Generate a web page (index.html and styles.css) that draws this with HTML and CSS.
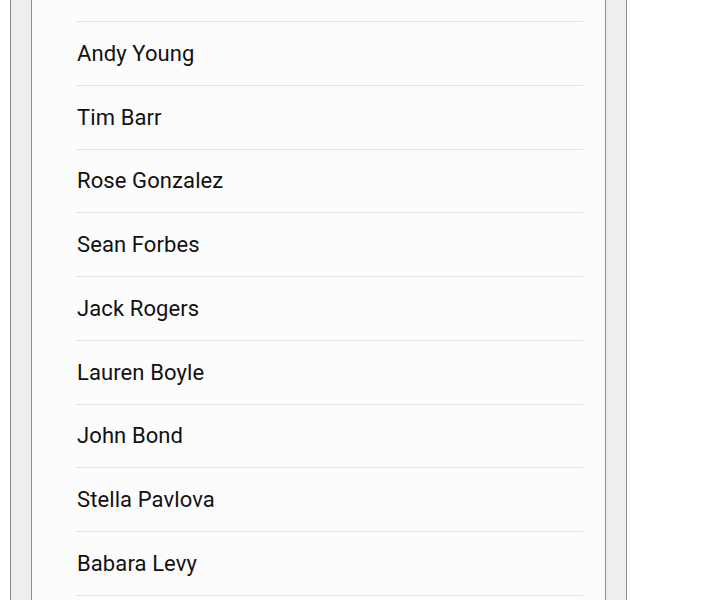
FILE: index.html
```html
<!DOCTYPE html>
<html>
<head>
<meta charset="utf-8">
<link rel="stylesheet" href="styles.css">
</head>
<body>
<div class="frame">
  <div class="panel">
    <ul class="list">
      <li class="item">Gordon Wallace</li>
      <li class="item">Andy Young</li>
      <li class="item">Tim Barr</li>
      <li class="item">Rose Gonzalez</li>
      <li class="item">Sean Forbes</li>
      <li class="item">Jack Rogers</li>
      <li class="item">Lauren Boyle</li>
      <li class="item">John Bond</li>
      <li class="item">Stella Pavlova</li>
      <li class="item">Babara Levy</li>
      <li class="item">Mark Taylor</li>
    </ul>
  </div>
</div>
</body>
</html>
```
FILE: styles.css
```css
html, body {
  margin: 0;
  padding: 0;
  background: #ffffff;
  height: 600px;
  overflow: hidden;
}
.frame {
  margin-left: 10px;
  height: 600px;
  background: #eeeeee;
  border-left: 1px solid #8e8e8e;
  border-right: 1px solid #8e8e8e;
  padding: 0 20px;
  box-sizing: content-box;
  width: 575px;
  overflow: hidden;
}
.panel {
  width: 573px;
  height: 600px;
  background: #fdfcfd;
  border-left: 1px solid #8e8e8e;
  border-right: 1px solid #8e8e8e;
  overflow: hidden;
}
.list {
  list-style: none;
  margin: -41.75px 22px 0 44px;
  padding: 0;
}
.item {
  height: 63.78px;
  box-sizing: border-box;
  border-bottom: 1px solid #e2e2e2;
  display: flex;
  align-items: center;
  padding-left: 1px;
  font-family: Roboto, "Noto Sans", sans-serif;
  font-size: 22px;
  letter-spacing: 0.1px;
  color: #111111;
}
```
